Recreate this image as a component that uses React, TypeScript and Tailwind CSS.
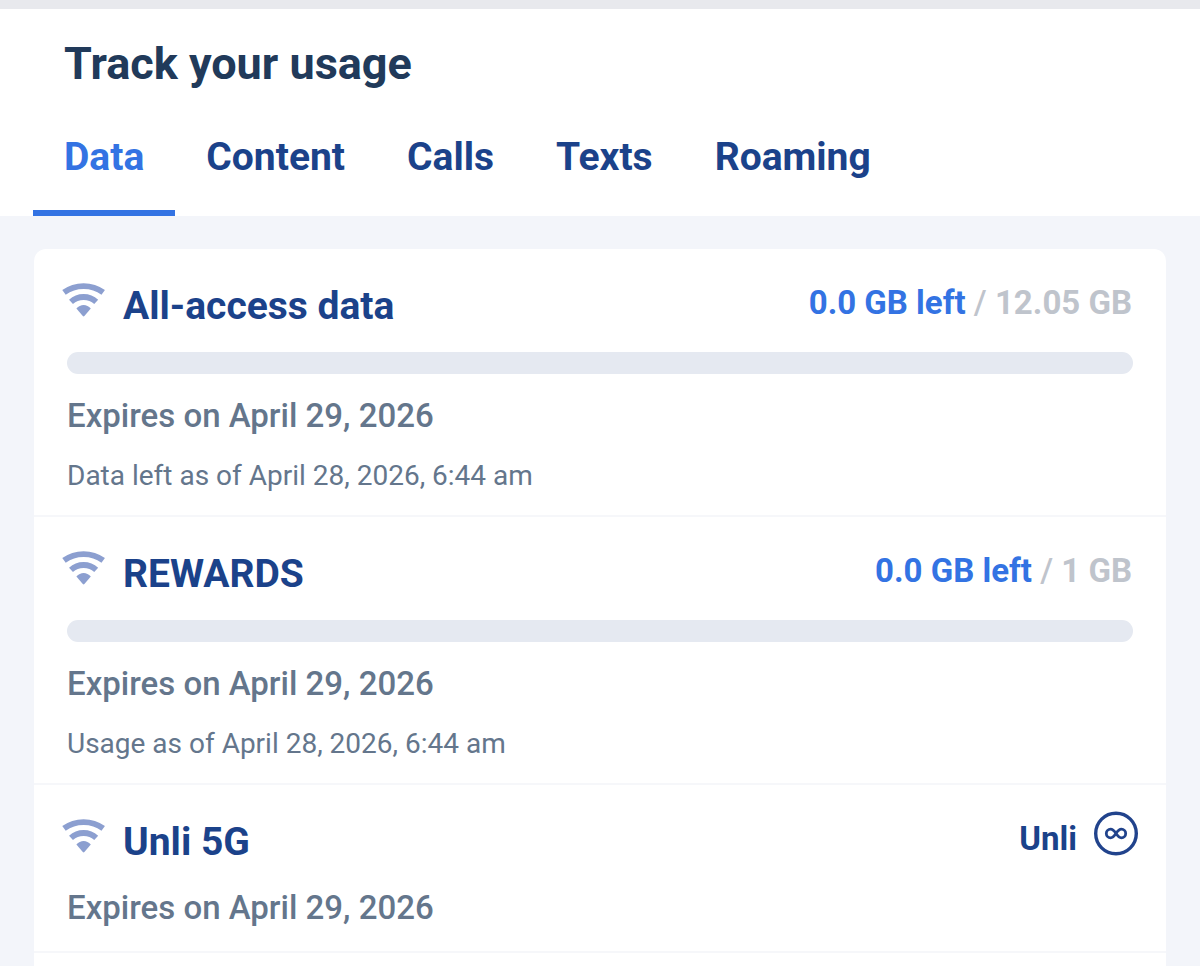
import { useState } from 'react'

interface UsageItem {
  name: string
  left?: string
  total?: string
  percentLeft?: number
  expires: string
  asOf?: string
}

const tabs = ['Data', 'Content', 'Calls', 'Texts', 'Roaming']

const usageItems: UsageItem[] = [
  {
    name: 'All-access data',
    left: '0.0 GB left',
    total: '12.05 GB',
    percentLeft: 0,
    expires: 'Expires on April 29, 2026',
    asOf: 'Data left as of April 28, 2026, 6:44 am',
  },
  {
    name: 'REWARDS',
    left: '0.0 GB left',
    total: '1 GB',
    percentLeft: 0,
    expires: 'Expires on April 29, 2026',
    asOf: 'Usage as of April 28, 2026, 6:44 am',
  },
  {
    name: 'Unli 5G',
    expires: 'Expires on April 29, 2026',
  },
]

function SignalIcon() {
  return (
    <svg className="mt-2 h-[34px] w-11 shrink-0" viewBox="0 0 44 34" fill="none" aria-hidden="true">
      <path d="M2 9.4C13.4 0.9 29.8 0.9 41.2 9.4" stroke="#8c9fd0" strokeWidth="5.8" />
      <path d="M9 18.8C16 12.4 27.2 12.4 34.2 18.8" stroke="#8c9fd0" strokeWidth="5.8" />
      <path d="M14.4 25.6C18.4 20.9 24.8 20.9 28.8 25.6L22.4 33Q21.6 33.8 20.8 33Z" fill="#8c9fd0" />
    </svg>
  )
}

function UnlimitedIcon() {
  return (
    <svg className="h-[45px] w-11 shrink-0" viewBox="0 0 44 45" fill="none" stroke="#21438c" aria-hidden="true">
      <circle cx="22" cy="22.5" r="20.3" strokeWidth="3.4" />
      <path
        d="M22 22.5C20 19.5 18.8 18.2 16.6 18.2A4.3 4.3 0 0 0 16.6 26.8C18.8 26.8 20 25.5 22 22.5C24 19.5 25.2 18.2 27.4 18.2A4.3 4.3 0 0 1 27.4 26.8C25.2 26.8 24 25.5 22 22.5Z"
        strokeWidth="2.8"
      />
    </svg>
  )
}

function UsageRow({ item }: { item: UsageItem }) {
  return (
    <li className="border-b-2 border-[#f6f7fa] pb-[21px]">
      <div className="flex items-start px-7 pt-[26px]">
        <SignalIcon />
        <h2 className="ml-[17px] pt-[7px] text-[39px] leading-[48px] font-bold text-[#1b428a]">{item.name}</h2>
        {item.total ? (
          <p className="mr-[6px] ml-auto pt-2 text-[33px] leading-10 font-bold text-[#bfc4cc]">
            <span className="text-[#3373e3]">{item.left}</span> <span className="font-medium">/</span> {item.total}
          </p>
        ) : (
          <div className="ml-auto flex items-start gap-[17px]">
            <p className="pt-2 text-[33px] leading-10 font-bold text-[#1b428a]">Unli</p>
            <UnlimitedIcon />
          </div>
        )}
      </div>
      <div className="flex flex-col gap-5 px-[33px] pt-5">
        {item.percentLeft !== undefined && (
          <div
            role="progressbar"
            aria-label={item.name}
            aria-valuenow={item.percentLeft}
            className="mt-[2px] h-[22px] overflow-hidden rounded-full bg-[#e5e9f1]"
          >
            <div className="h-full bg-[#3373e3]" style={{ width: `${item.percentLeft}%` }} />
          </div>
        )}
        <p className="text-[33px] leading-[44px] font-medium text-[#64768c]">{item.expires}</p>
        {item.asOf && <p className="text-[28px] leading-9 text-[#64768c]">{item.asOf}</p>}
      </div>
    </li>
  )
}

export default function App() {
  const [activeTab, setActiveTab] = useState('Data')

  return (
    <div className="flex min-h-screen flex-col bg-[#f3f5fa] font-['Roboto',sans-serif]">
      <header className="border-t-9 border-[#e8e9ed] bg-white">
        <h1 className="px-16 pt-[29px] text-[45px] leading-[52px] font-bold text-[#213a5a]">Track your usage</h1>
        <div role="tablist" className="mt-[43px] flex px-[33px]">
          {tabs.map((tab) => (
            <button
              key={tab}
              type="button"
              role="tab"
              aria-selected={tab === activeTab}
              onClick={() => setActiveTab(tab)}
              className={`border-b-6 px-[31px] pb-[29px] text-[39px] leading-[48px] font-bold ${
                tab === activeTab ? 'border-[#3373e3] text-[#3373e3]' : 'border-transparent text-[#1b428a]'
              }`}
            >
              {tab}
            </button>
          ))}
        </div>
      </header>

      <main className="flex flex-1 flex-col px-[34px] pt-[33px]">
        <ul className="flex-1 rounded-t-xl bg-white">
          {usageItems.map((item) => (
            <UsageRow key={item.name} item={item} />
          ))}
        </ul>
      </main>
    </div>
  )
}
